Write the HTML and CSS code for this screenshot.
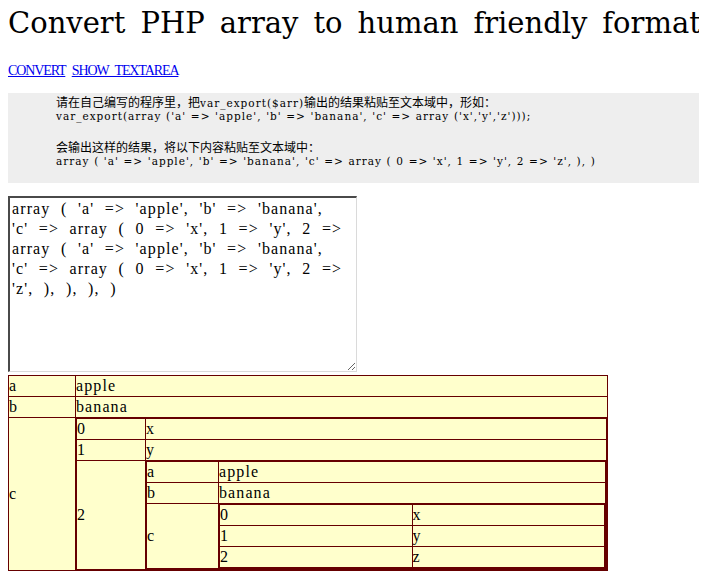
FILE: index.html
```html
<!DOCTYPE html>
<html lang="zh">
<head>
<meta charset="utf-8">
<title>Convert PHP array to human friendly format</title>
<link rel="stylesheet" href="styles.css">
</head>
<body>
<h1 class="title">Convert PHP array to human friendly format</h1>
<p class="links"><a href="#">CONVERT</a> <a href="#">SHOW TEXTAREA</a></p>
<div class="help">
<div class="line"><span class="cjk">请在自己编写的程序里，把</span>var_export($arr)<span class="cjk">输出的结果粘贴至文本域中，形如：</span></div>
<div class="line">var_export(array ('a' =&gt; 'apple', 'b' =&gt; 'banana', 'c' =&gt; array ('x','y','z')));</div>
<div class="line"></div>
<div class="line"><span class="cjk">会输出这样的结果，将以下内容粘贴至文本域中：</span></div>
<div class="line">array ( 'a' =&gt; 'apple', 'b' =&gt; 'banana', 'c' =&gt; array ( 0 =&gt; 'x', 1 =&gt; 'y', 2 =&gt; 'z', ), )</div>
</div>
<textarea class="input">array ( 'a' =&gt; 'apple', 'b' =&gt; 'banana',
'c' =&gt; array ( 0 =&gt; 'x', 1 =&gt; 'y', 2 =&gt;
array ( 'a' =&gt; 'apple', 'b' =&gt; 'banana',
'c' =&gt; array ( 0 =&gt; 'x', 1 =&gt; 'y', 2 =&gt;
'z', ), ), ), )</textarea>
<table class="arr">
<tr><td class="k1">a</td><td>apple</td></tr>
<tr><td>b</td><td>banana</td></tr>
<tr><td>c</td><td>
  <table class="arr nested">
  <tr><td class="k2">0</td><td>x</td></tr>
  <tr><td>1</td><td>y</td></tr>
  <tr><td>2</td><td>
    <table class="arr nested">
    <tr><td class="k3">a</td><td>apple</td></tr>
    <tr><td>b</td><td>banana</td></tr>
    <tr><td>c</td><td>
      <table class="arr nested">
      <tr><td class="k4">0</td><td>x</td></tr>
      <tr><td>1</td><td>y</td></tr>
      <tr><td>2</td><td>z</td></tr>
      </table>
    </td></tr>
    </table>
  </td></tr>
  </table>
</td></tr>
</table>
</body>
</html>
```
FILE: styles.css
```css
html {
  overflow: hidden;
}
body {
  margin: 8px 8px 0 8px;
  font-family: "DejaVu Serif", "Noto Sans CJK SC", serif;
  color: #000;
  background: #fff;
}
.title {
  margin: 0;
  font-size: 29px;
  line-height: 30px;
  font-weight: normal;
  word-spacing: 5.8px;
  white-space: nowrap;
}
.links {
  margin: 23px 0 12px 0;
  font-family: "Liberation Serif", serif;
  font-size: 14px;
  line-height: 20px;
  letter-spacing: -1.1px;
  word-spacing: 4px;
}
.links a {
  color: #0000ee;
  text-decoration: underline;
}
.help {
  box-sizing: border-box;
  width: 699px;
  background: #eeeeee;
  padding: 1px 8px 14px 48px;
  font-size: 10.5px;
  line-height: 15px;
  letter-spacing: 1px;
  word-spacing: 0.3px;
  white-space: nowrap;
  overflow: hidden;
}
.line {
  height: 15px;
}
.cjk {
  font-family: "Noto Sans CJK SC", sans-serif;
  font-size: 12px;
  letter-spacing: 0;
  word-spacing: 0;
}
.input {
  display: block;
  box-sizing: border-box;
  width: 349px;
  height: 176px;
  margin: 13px 0 3px 0;
  padding: 1px 2px;
  border-style: solid;
  border-width: 2px 1px 1px 2px;
  border-color: #4a4a4a #dadada #dadada #4a4a4a;
  font-family: "Liberation Serif", serif;
  font-size: 16px;
  line-height: 20px;
  letter-spacing: 1.1px;
  word-spacing: 5.5px;
  color: #000;
  background: #fff;
  resize: both;
  overflow: hidden;
}
.arr {
  width: 600px;
  border-collapse: collapse;
  border: 1px solid #660000;
  background: #ffffcc;
  font-family: "Liberation Serif", serif;
  font-size: 16px;
  line-height: 20px;
  letter-spacing: 1.1px;
}
.arr td {
  border: 1px solid #660000;
  padding: 0;
  vertical-align: middle;
  text-align: left;
}
.arr.nested {
  width: 100%;
}
.k1 { width: 66px; }
.k2 { width: 68px; }
.k3 { width: 71px; }
.k4 { width: 50%; }
```
